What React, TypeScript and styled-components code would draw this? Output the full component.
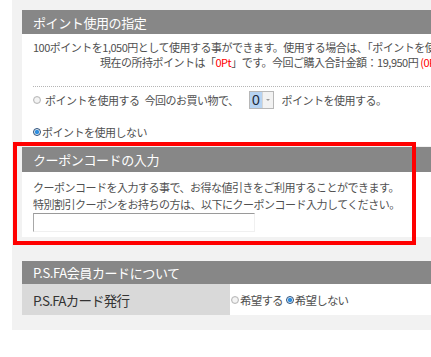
import React from "react";
import styled, { createGlobalStyle } from "styled-components";

const GlobalStyle = createGlobalStyle`
  html, body {
    margin: 0;
    padding: 0;
    background: #ffffff;
    overflow: hidden;
  }
  body {
    font-family: "Noto Sans CJK JP", "Noto Sans", sans-serif;
    color: #505050;
  }
`;

const Page = styled.div`
  position: relative;
  width: 431px;
  height: 357px;
  overflow: hidden;
`;

const Panel = styled.div`
  margin-left: 12px;
  width: 640px;
  background: #f2f2f2;
  padding: 10px 0 15px 10px;
  display: flex;
  flex-direction: column;
`;

const Section = styled.section<{ $gap?: number }>`
  margin-top: ${(p) => p.$gap ?? 0}px;
  display: flex;
  flex-direction: column;
`;

const Header = styled.div<{ $h: number }>`
  height: ${(p) => p.$h}px;
  background: #878787;
  color: #fff;
  font-size: 13px;
  letter-spacing: -0.4px;
  padding-left: 11px;
  display: flex;
  align-items: center;
  white-space: nowrap;
`;

const Body = styled.div<{ $pt: number; $pb: number }>`
  background: #fff;
  padding: ${(p) => p.$pt}px 0 ${(p) => p.$pb}px 11px;
  display: flex;
  flex-direction: column;
  font-size: 11px;
  letter-spacing: -0.5px;
  white-space: nowrap;
`;

const Line = styled.div<{ $lh: number; $indent?: number }>`
  line-height: ${(p) => p.$lh}px;
  height: ${(p) => p.$lh}px;
  padding-left: ${(p) => p.$indent ?? 0}px;
`;

const Red = styled.span`
  color: #f00;
`;

const Dotted = styled.div`
  margin-top: 16px;
  border-top: 1px dotted #b5b5b5;
  height: 0;
`;

const RadioRow = styled.div<{ $mt: number; $h: number }>`
  margin-top: ${(p) => p.$mt}px;
  height: ${(p) => p.$h}px;
  display: flex;
  align-items: center;
  gap: 5px;
`;

const RadioLabel = styled.label<{ $spaced?: boolean }>`
  display: inline-flex;
  align-items: center;
  gap: ${(p) => (p.$spaced ? 4 : 1)}px;
`;

const RadioMark = styled.span<{ $checked?: boolean }>`
  display: inline-block;
  box-sizing: border-box;
  width: 8px;
  height: 8px;
  border-radius: 50%;
  border: 1px solid ${(p) => (p.$checked ? "#2a4f7a" : "#b9b9b9")};
  background: ${(p) =>
    p.$checked
      ? "radial-gradient(circle, #2f8fe0 0 45%, #dfe9f3 55%)"
      : "radial-gradient(circle, #f4f4f4 0 50%, #e2e2e2 70%)"};
`;

const SelectBox = styled.span`
  margin-left: 5px;
  margin-right: 3px;
  display: inline-flex;
  height: 18px;
  box-sizing: border-box;
  border: 1px solid #b7b7b7;
  background: #fff;
`;

const SelectValue = styled.span`
  width: 12px;
  background: #b6d3f2;
  color: #1c2a3a;
  font-size: 14px;
  line-height: 16px;
  text-align: center;
  font-family: "Liberation Sans", Arial, sans-serif;
`;

const SelectArrow = styled.span`
  width: 10px;
  background: #f2f2f2;
  border-left: 1px solid #d6d6d6;
  display: flex;
  align-items: center;
  justify-content: center;
  &::after {
    content: "";
    border-left: 2px solid transparent;
    border-right: 2px solid transparent;
    border-top: 2px solid #999;
  }
`;

const CouponInput = styled.input`
  margin-top: 0;
  width: 222px;
  height: 19px;
  box-sizing: border-box;
  border: 1px solid #c8c8c8;
  border-top-color: #9a9a9a;
  border-left-color: #a8a8a8;
  border-right-color: #f0f0f0;
  border-bottom-color: #f0f0f0;
  padding: 0;
  background: #fff;
  outline: none;
`;

const Table = styled.div`
  display: grid;
  grid-template-columns: 208px 1fr;
  height: 31px;
`;

const LabelCell = styled.div`
  background: #d9d9d9;
  color: #333;
  font-size: 13.5px;
  letter-spacing: -0.8px;
  padding-left: 11px;
  display: flex;
  align-items: center;
  white-space: nowrap;
`;

const ValueCell = styled.div`
  background: #fff;
  padding-left: 1px;
  display: flex;
  align-items: center;
  gap: 3px;
  font-size: 11.5px;
  letter-spacing: -0.8px;
  white-space: nowrap;
`;

const Annotation = styled.div`
  position: absolute;
  left: 13px;
  top: 142px;
  width: 403px;
  height: 103px;
  box-sizing: border-box;
  border: 4px solid #f00;
  pointer-events: none;
`;

export default function App() {
  return (
    <>
      <GlobalStyle />
      <Page>
        <Panel>
          <Section>
            <Header $h={24}>ポイント使用の指定</Header>
            <Body $pt={6} $pb={7}>
              <Line $lh={15}>
                100ポイントを1,050円として使用する事ができます。使用する場合は、「ポイントを使用する」を選択してください。
              </Line>
              <Line $lh={15} $indent={67}>
                現在の所持ポイントは「<Red>0Pt</Red>」です。今回ご購入合計金額：19,950円 <Red>(0Pt)</Red>
              </Line>
              <Dotted />
              <RadioRow $mt={4} $h={18}>
                <RadioLabel $spaced>
                  <RadioMark />
                  ポイントを使用する
                </RadioLabel>
                <span>今回のお買い物で、</span>
                <SelectBox>
                  <SelectValue>0</SelectValue>
                  <SelectArrow />
                </SelectBox>
                <span>ポイントを使用する。</span>
              </RadioRow>
              <RadioRow $mt={16} $h={14}>
                <RadioLabel>
                  <RadioMark $checked />
                  ポイントを使用しない
                </RadioLabel>
              </RadioRow>
            </Body>
          </Section>

          <Section $gap={1}>
            <Header $h={25}>クーポンコードの入力</Header>
            <Body $pt={7} $pb={5}>
              <Line $lh={17}>
                クーポンコードを入力する事で、お得な値引きをご利用することができます。
              </Line>
              <Line $lh={17}>
                特別割引クーポンをお持ちの方は、以下にクーポンコード入力してください。
              </Line>
              <CouponInput type="text" />
            </Body>
          </Section>

          <Section $gap={24}>
            <Header $h={23}>P.S.FA会員カードについて</Header>
            <Table>
              <LabelCell>P.S.FAカード発行</LabelCell>
              <ValueCell>
                <RadioLabel>
                  <RadioMark />
                  希望する
                </RadioLabel>
                <RadioLabel>
                  <RadioMark $checked />
                  希望しない
                </RadioLabel>
              </ValueCell>
            </Table>
          </Section>
        </Panel>
        <Annotation />
      </Page>
    </>
  );
}
